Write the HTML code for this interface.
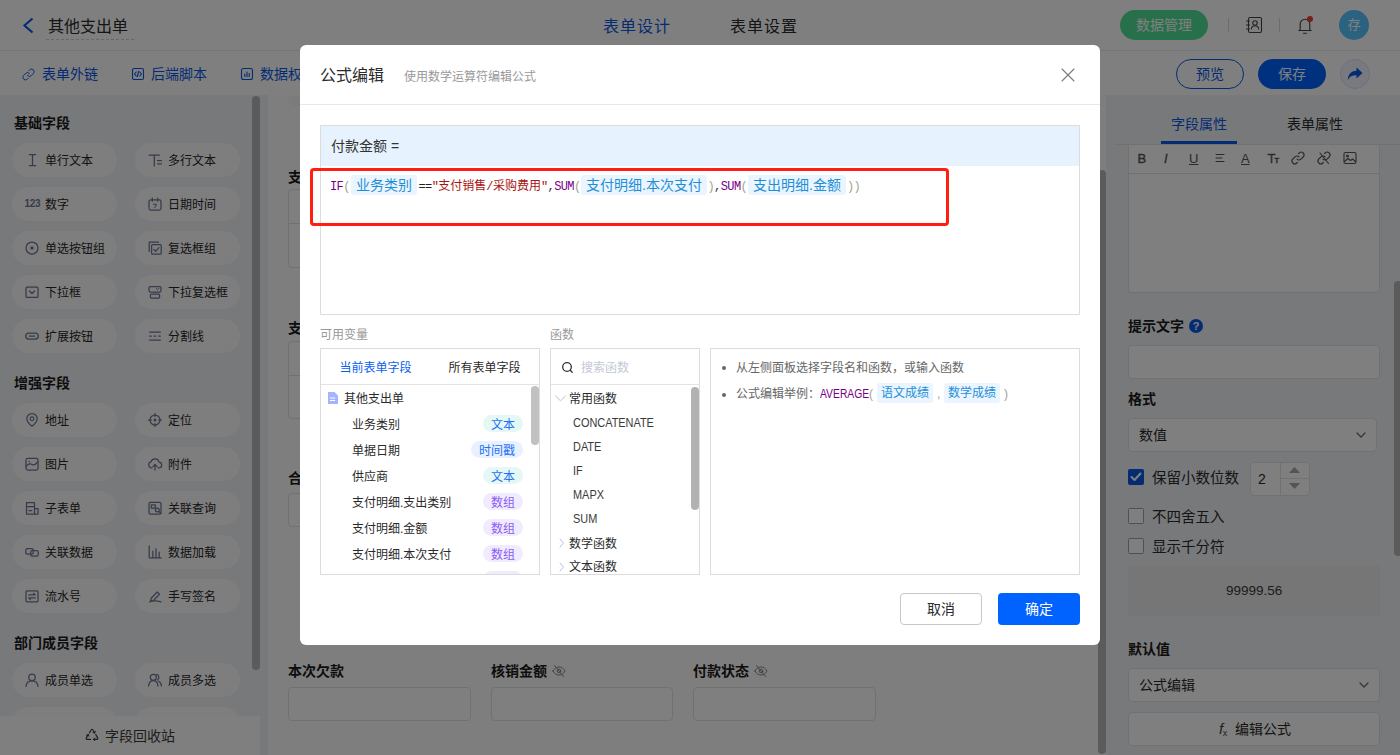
<!DOCTYPE html>
<html lang="zh-CN"><head><meta charset="utf-8"><title>公式编辑</title><style>
*{box-sizing:border-box;margin:0;padding:0}
html,body{width:1400px;height:755px;overflow:hidden;background:#fff}
body{font-family:"Liberation Sans","Noto Sans CJK SC",sans-serif;font-size:14px;color:#333;position:relative}
.abs{position:absolute}
.t{position:absolute;white-space:nowrap;line-height:20px;height:20px}
svg{position:absolute;overflow:visible}
#app{position:absolute;left:0;top:0;width:1400px;height:755px;overflow:hidden;background:#fff}
#mask{position:absolute;left:0;top:0;width:1400px;height:755px;background:rgba(0,0,0,.5)}
#modal{position:absolute;left:300px;top:45px;width:800px;height:600px;background:#fff;border-radius:6px;overflow:hidden}
.hdr{position:absolute;left:0;top:0;width:1400px;height:51px;border-bottom:1px solid #eeeeee;background:#fff}
.tb{position:absolute;left:0;top:51px;width:1400px;height:44px;background:#fff;box-shadow:0 1px 3px rgba(0,0,0,.08)}
.side{position:absolute;left:0;top:96px;width:268px;height:659px;background:#f1f3f7}
.pill{position:absolute;width:105px;height:34px;border-radius:17px;background:#fdfdfe}
.pill .t{left:33px;top:8px;font-size:12px;color:#262626}
.sec{font-weight:bold;font-size:14px;color:#1a1a1a}
.sfoot{position:absolute;left:0;top:716px;width:260px;height:39px;background:#fff}
.thumb{position:absolute;border-radius:4px;background:#b6b6b6}
.right{position:absolute;left:1106px;top:96px;width:294px;height:659px;background:#f1f3f7}
.inp{position:absolute;border:1px solid #e3e3e3;border-radius:4px;background:#fff}
.lbl{font-weight:bold;font-size:14px;color:#1a1a1a}
.cb{position:absolute;width:16px;height:16px;border:1px solid #a09cb0;border-radius:1.5px;background:#fff}
.box{position:absolute;border:1px solid #dcdcdc;background:#fff}
.tag{position:absolute;height:17px;border-radius:9px;font-size:12px;line-height:21px;text-align:center;overflow:hidden}
.ftag{position:absolute;height:20px;border-radius:3px;background:#ebf5ff;color:#1e8fd6;font-size:14px;line-height:20px;text-align:center;white-space:nowrap}
.mono{font-family:"Liberation Mono","Noto Sans CJK SC",monospace;font-size:12px;letter-spacing:-0.6px}
</style></head><body>
<div id="app">
<div class="hdr">
<svg style="left:22px;top:17px" width="13" height="17" viewBox="0 0 13 17" fill="none" stroke="#0a58e6" stroke-width="2.2" stroke-linecap="butt" stroke-linejoin="miter"><path d="M10.5 1.5L2.5 8.5l8 7"/></svg>
<div class="abs" style="left:46px;top:12px;width:88px;height:28px;border-bottom:1px dashed #d0d0d0"></div>
<div class="t " style="left:48px;top:17px;font-size:16px;color:#2a2a2a;">其他支出单</div>
<div class="t " style="left:603px;top:17px;font-size:16px;color:#0a58e6;letter-spacing:1px;">表单设计</div>
<div class="t " style="left:730px;top:17px;font-size:16px;color:#2a2a2a;letter-spacing:1px;">表单设置</div>
<div class="abs" style="left:1120px;top:10px;width:88px;height:30px;border-radius:15px;background:#50e098"></div>
<div class="t " style="left:1136px;top:15px;font-size:14px;color:#fff;">数据管理</div>
<div class="abs" style="left:1228px;top:18px;width:1px;height:14px;background:#d8d8d8"></div>
<div class="abs" style="left:1279px;top:18px;width:1px;height:14px;background:#d8d8d8"></div>
<svg style="left:1245px;top:16px" width="18" height="18" viewBox="0 0 18 18" fill="none" stroke="#454545" stroke-width="1.1" stroke-linecap="round" stroke-linejoin="round"><rect x="3.5" y="1.5" width="13" height="15" rx="1.5"/><circle cx="10" cy="7" r="2.2"/><path d="M6.3 13c.3-2 1.7-3.2 3.7-3.2s3.4 1.2 3.7 3.2"/><path d="M1.5 5h3M1.5 9h3M1.5 13h3"/></svg>
<svg style="left:1296px;top:15px" width="18" height="20" viewBox="0 0 18 20" fill="none" stroke="#454545" stroke-width="1.15" stroke-linecap="round" stroke-linejoin="round"><path d="M2.8 15.5h12.4M4.2 15.5V9a4.8 4.8 0 0 1 9.6 0v6.5M7.6 18.2h2.8"/><circle cx="14" cy="4" r="3" fill="#f03a3a" stroke="none"/></svg>
<div class="abs" style="left:1339px;top:10px;width:30px;height:30px;border-radius:15px;background:#54c4ff"></div>
<div class="t " style="left:1347.5px;top:15px;font-size:13px;color:#fff;">存</div>
</div>
<div class="tb"></div>
<svg style="left:22px;top:67.5px" width="13" height="13" viewBox="0 0 14 14" fill="none" stroke="#0a58e6" stroke-width="1.05" stroke-linecap="round" stroke-linejoin="round"><path d="M6 8.2a2.8 2.8 0 0 0 4 0l2.2-2.2a2.8 2.8 0 0 0-4-4L7.5 2.7"/><path d="M8 5.8a2.8 2.8 0 0 0-4 0L1.8 8a2.8 2.8 0 0 0 4 4l.7-.7"/></svg>
<div class="t " style="left:42px;top:64px;font-size:14px;color:#0a58e6;">表单外链</div>
<svg style="left:131px;top:67px" width="14" height="14" viewBox="0 0 14 14" fill="none" stroke="#0a58e6" stroke-width="1.1" stroke-linecap="round" stroke-linejoin="round"><rect x="1.5" y="1.5" width="11" height="11" rx="1.5"/><path d="M5.2 5L3.5 7l1.7 2M8.8 5l1.7 2-1.7 2M7.6 4.5L6.4 9.5"/></svg>
<div class="t " style="left:151px;top:64px;font-size:14px;color:#0a58e6;">后端脚本</div>
<svg style="left:240px;top:67px" width="14" height="14" viewBox="0 0 14 14" fill="none" stroke="#0a58e6" stroke-width="1.1" stroke-linecap="round" stroke-linejoin="round"><rect x="1.5" y="1.5" width="11" height="11" rx="2"/><path d="M4.8 9.5V7M7 9.5V5M9.2 9.5V6.5"/></svg>
<div class="t " style="left:260px;top:64px;font-size:14px;color:#0a58e6;">数据权限</div>
<div class="abs" style="left:1176px;top:59px;width:68px;height:30px;border-radius:15px;border:1px solid #0a58e6;background:#fff"></div>
<div class="t " style="left:1196px;top:64px;font-size:14px;color:#0a58e6;">预览</div>
<div class="abs" style="left:1258px;top:59px;width:68px;height:30px;border-radius:15px;background:#0062ff"></div>
<div class="t " style="left:1278px;top:64px;font-size:14px;color:#fff;">保存</div>
<div class="abs" style="left:1340px;top:59px;width:30px;height:30px;border-radius:15px;background:#f0f4ff;border:1px solid #d9e2f5"></div>
<svg style="left:1347px;top:67px" width="16" height="14" viewBox="0 0 16 14"><path d="M9.5 0.5L15.5 6l-6 5.5V8.2C5.5 8 2.8 9.3.8 13 1 8 3.5 4 9.5 3.8z" fill="#0a58e6"/></svg>
<div class="side"></div>
<div class="t sec" style="left:14px;top:113px;font-size:14px;color:#1a1a1a;">基础字段</div>
<div class="pill" style="left:12px;top:143px">
<svg style="left:13px;top:10px" width="14" height="14" viewBox="0 0 14 14" fill="none" stroke="#6b7792" stroke-width="1.25" stroke-linecap="round" stroke-linejoin="round"><path d="M4.3 1.5h6.4M7.5 1.5v11M4.3 12.5h6.4"/></svg>
<div class="t">单行文本</div></div>
<div class="pill" style="left:135px;top:143px">
<svg style="left:13px;top:10px" width="14" height="14" viewBox="0 0 14 14" fill="none" stroke="#6b7792" stroke-width="1.25" stroke-linecap="round" stroke-linejoin="round"><path d="M1 2h10.5M6.3 2v11M9.5 7.5h4M9.5 10.8h4"/></svg>
<div class="t">多行文本</div></div>
<div class="pill" style="left:12px;top:187px">
<div class="t" style="left:12.5px;top:7px;font-size:10px;font-weight:bold;color:#6b7792;letter-spacing:-0.3px">123</div>
<div class="t">数字</div></div>
<div class="pill" style="left:135px;top:187px">
<svg style="left:13px;top:10px" width="14" height="14" viewBox="0 0 14 14" fill="none" stroke="#6b7792" stroke-width="1.25" stroke-linecap="round" stroke-linejoin="round"><rect x="1" y="2.8" width="12" height="10.2" rx="1.8"/><path d="M4.3 1v3.2M9.7 1v3.2"/><path d="M5.3 7.2h3.2l-1.8 3.6" stroke-width="1"/></svg>
<div class="t">日期时间</div></div>
<div class="pill" style="left:12px;top:231px">
<svg style="left:13px;top:10px" width="14" height="14" viewBox="0 0 14 14" fill="none" stroke="#6b7792" stroke-width="1.25" stroke-linecap="round" stroke-linejoin="round"><circle cx="7" cy="7" r="6"/><circle cx="7" cy="7" r="1.7" fill="#6b7792" stroke="none"/></svg>
<div class="t">单选按钮组</div></div>
<div class="pill" style="left:135px;top:231px">
<svg style="left:13px;top:10px" width="14" height="14" viewBox="0 0 14 14" fill="none" stroke="#6b7792" stroke-width="1.25" stroke-linecap="round" stroke-linejoin="round"><path d="M1.2 10.5V1.2h9.3"/><rect x="3.6" y="3.6" width="9.6" height="9.6" rx="1"/><path d="M5.8 8.4l1.9 1.9 3.2-3.6"/></svg>
<div class="t">复选框组</div></div>
<div class="pill" style="left:12px;top:275px">
<svg style="left:13px;top:10px" width="14" height="14" viewBox="0 0 14 14" fill="none" stroke="#6b7792" stroke-width="1.25" stroke-linecap="round" stroke-linejoin="round"><rect x="1" y="2" width="12" height="10.4" rx="1"/><path d="M4.5 6L7 8.5 9.5 6"/></svg>
<div class="t">下拉框</div></div>
<div class="pill" style="left:135px;top:275px">
<svg style="left:13px;top:10px" width="14" height="14" viewBox="0 0 14 14" fill="none" stroke="#6b7792" stroke-width="1.25" stroke-linecap="round" stroke-linejoin="round"><rect x="1" y="1.6" width="12" height="5.4" rx="1.2"/><rect x="2.4" y="9" width="9.2" height="4" rx="1"/><path d="M8.3 3.5l1.2 1.2 1.6-1.6" stroke-width="1"/></svg>
<div class="t">下拉复选框</div></div>
<div class="pill" style="left:12px;top:319px">
<svg style="left:13px;top:10px" width="14" height="14" viewBox="0 0 14 14" fill="none" stroke="#6b7792" stroke-width="1.25" stroke-linecap="round" stroke-linejoin="round"><rect x="0.7" y="4" width="12.6" height="6.2" rx="3.1"/><path d="M4.3 7.1h5.4"/></svg>
<div class="t">扩展按钮</div></div>
<div class="pill" style="left:135px;top:319px">
<svg style="left:13px;top:10px" width="14" height="14" viewBox="0 0 14 14" fill="none" stroke="#6b7792" stroke-width="1.25" stroke-linecap="round" stroke-linejoin="round"><path d="M1.2 3h11.6M1.2 11.2h11.6" stroke-linecap="butt"/><path d="M1.2 7.1h2.6M5.7 7.1h2.6M10.2 7.1h2.6" stroke-linecap="butt"/></svg>
<div class="t">分割线</div></div>
<div class="t sec" style="left:14px;top:373px;font-size:14px;color:#1a1a1a;">增强字段</div>
<div class="pill" style="left:12px;top:403px">
<svg style="left:13px;top:10px" width="14" height="14" viewBox="0 0 14 14" fill="none" stroke="#6b7792" stroke-width="1.25" stroke-linecap="round" stroke-linejoin="round"><path d="M7 13.3S1.8 9 1.8 5.7a5.2 5.2 0 0 1 10.4 0C12.2 9 7 13.3 7 13.3z"/><circle cx="7" cy="5.7" r="1.8"/></svg>
<div class="t">地址</div></div>
<div class="pill" style="left:135px;top:403px">
<svg style="left:13px;top:10px" width="14" height="14" viewBox="0 0 14 14" fill="none" stroke="#6b7792" stroke-width="1.25" stroke-linecap="round" stroke-linejoin="round"><circle cx="7" cy="7" r="5"/><circle cx="7" cy="7" r="1.5" fill="#6b7792" stroke="none"/><path d="M7 .6v2.8M7 10.6v2.8M.6 7h2.8M10.6 7h2.8"/></svg>
<div class="t">定位</div></div>
<div class="pill" style="left:12px;top:447px">
<svg style="left:13px;top:10px" width="14" height="14" viewBox="0 0 14 14" fill="none" stroke="#6b7792" stroke-width="1.25" stroke-linecap="round" stroke-linejoin="round"><rect x="1" y="1.4" width="12" height="11.6" rx="1.8"/><path d="M1.2 9.5c2.2-3 4.2-3.3 5.8-2s3.2.4 5.8-2.5"/><circle cx="4.2" cy="4.6" r=".8" fill="#6b7792" stroke="none"/></svg>
<div class="t">图片</div></div>
<div class="pill" style="left:135px;top:447px">
<svg style="left:13px;top:10px" width="14" height="14" viewBox="0 0 14 14" fill="none" stroke="#6b7792" stroke-width="1.25" stroke-linecap="round" stroke-linejoin="round"><path d="M4 10.8h-.6a3 3 0 0 1-.4-5.9 4.2 4.2 0 0 1 8.1.3 2.8 2.8 0 0 1-.4 5.6H10"/><path d="M7 13V7.6M4.9 9.6L7 7.5l2.1 2.1"/></svg>
<div class="t">附件</div></div>
<div class="pill" style="left:12px;top:491px">
<svg style="left:13px;top:10px" width="14" height="14" viewBox="0 0 14 14" fill="none" stroke="#6b7792" stroke-width="1.25" stroke-linecap="round" stroke-linejoin="round"><path d="M1.5 1.5h8v11.5h-8zM1.5 5.5h8"/><path d="M9.5 7.5h3.5v5.5H9.5M3.8 9.5h3"/></svg>
<div class="t">子表单</div></div>
<div class="pill" style="left:135px;top:491px">
<svg style="left:13px;top:10px" width="14" height="14" viewBox="0 0 14 14" fill="none" stroke="#6b7792" stroke-width="1.25" stroke-linecap="round" stroke-linejoin="round"><rect x="1" y="1.4" width="12" height="11.6" rx="1.2"/><path d="M3.3 3.8h4v3.4h-4z"/><circle cx="9.3" cy="9" r="1.9"/><path d="M10.7 10.4l2.3 2.3"/></svg>
<div class="t">关联查询</div></div>
<div class="pill" style="left:12px;top:535px">
<svg style="left:13px;top:10px" width="14" height="14" viewBox="0 0 14 14" fill="none" stroke="#6b7792" stroke-width="1.25" stroke-linecap="round" stroke-linejoin="round"><rect x="0.8" y="3.6" width="7.5" height="5.6" rx="1.6"/><rect x="5.7" y="5.6" width="7.5" height="5.6" rx="1.6"/></svg>
<div class="t">关联数据</div></div>
<div class="pill" style="left:135px;top:535px">
<svg style="left:13px;top:10px" width="14" height="14" viewBox="0 0 14 14" fill="none" stroke="#6b7792" stroke-width="1.25" stroke-linecap="round" stroke-linejoin="round"><path d="M1.2 0.8v12h12"/><path d="M4.8 6.2v6.4M8 3.6v9M11.2 7.2v5.4"/></svg>
<div class="t">数据加载</div></div>
<div class="pill" style="left:12px;top:579px">
<svg style="left:13px;top:10px" width="14" height="14" viewBox="0 0 14 14" fill="none" stroke="#6b7792" stroke-width="1.25" stroke-linecap="round" stroke-linejoin="round"><rect x="1" y="1.8" width="12" height="11" rx="1"/><path d="M3.8 5.9h6.4M3.8 8.9h6.4M8.6 4.3l1.6 1.6M5.4 10.5L3.8 8.9"/></svg>
<div class="t">流水号</div></div>
<div class="pill" style="left:135px;top:579px">
<svg style="left:13px;top:10px" width="14" height="14" viewBox="0 0 14 14" fill="none" stroke="#6b7792" stroke-width="1.25" stroke-linecap="round" stroke-linejoin="round"><path d="M3.2 9.2l6-6.2 2.3 2.3-6 6.2-2.9.6z"/><path d="M1.5 13c2.5-1.2 6.5-1.4 11.5-.2"/></svg>
<div class="t">手写签名</div></div>
<div class="t sec" style="left:14px;top:633px;font-size:14px;color:#1a1a1a;">部门成员字段</div>
<div class="pill" style="left:12px;top:663px">
<svg style="left:13px;top:10px" width="14" height="14" viewBox="0 0 14 14" fill="none" stroke="#6b7792" stroke-width="1.25" stroke-linecap="round" stroke-linejoin="round"><circle cx="7" cy="4.3" r="3.3"/><path d="M1 13.4c.3-3.5 2.7-5.6 6-5.6s5.7 2.1 6 5.6"/></svg>
<div class="t">成员单选</div></div>
<div class="pill" style="left:135px;top:663px">
<svg style="left:13px;top:10px" width="14" height="14" viewBox="0 0 14 14" fill="none" stroke="#6b7792" stroke-width="1.25" stroke-linecap="round" stroke-linejoin="round"><circle cx="5.3" cy="4.3" r="3"/><path d="M.6 13c.3-3.2 2-5.3 4.7-5.3s4.4 2.1 4.7 5.3"/><path d="M8.6 1.4a3 3 0 0 1 .6 5.6M10.6 8.2c1.7.8 2.6 2.4 2.8 4.8"/></svg>
<div class="t">成员多选</div></div>
<div class="pill" style="left:12px;top:707px">
<div class="t">部门单选</div></div>
<div class="pill" style="left:135px;top:707px">
<div class="t">部门多选</div></div>
<div class="thumb" style="left:252px;top:96px;width:8px;height:574px"></div>
<div class="sfoot"></div>
<svg style="left:85px;top:727.2px" width="14" height="14" viewBox="0 0 14 14" fill="none" stroke="#3c3c3c" stroke-width="1.15" stroke-linecap="round" stroke-linejoin="round"><path d="M4.4 5.9L6.2 2.7a.9.9 0 0 1 1.6 0l1.8 3.2"/><path d="M10.8 7.6l1.9 3.3a.9.9 0 0 1-.8 1.4H8.6"/><path d="M5.6 12.3H2.1a.9.9 0 0 1-.8-1.4L3.2 7.6"/><path d="M8 5.5l1.7.5.5-1.7M9.8 10.9l-1.3 1.4 1.3 1.4M1.6 8.1l1.7-.6.5 1.7" stroke-width="1"/></svg>
<div class="t " style="left:105px;top:726px;font-size:14px;color:#3a3a3a;">字段回收站</div>
<div class="abs" style="left:268px;top:95px;width:838px;height:660px;background:#fcfcfc"></div>
<div class="abs" style="left:288px;top:96px;width:800px;height:10px;background:#f7f7f7;border-radius:0 0 8px 8px"></div>
<div class="t lbl" style="left:288px;top:166.5px;font-size:14px;color:#1a1a1a;">支付明细</div>
<div class="inp" style="left:288px;top:189px;width:800px;height:79px"><div class="abs" style="left:0;top:33px;width:100%;height:1px;background:#e3e3e3"></div></div>
<div class="t lbl" style="left:288px;top:318px;font-size:14px;color:#1a1a1a;">支出明细</div>
<div class="inp" style="left:288px;top:341px;width:800px;height:78px"><div class="abs" style="left:0;top:33px;width:100%;height:1px;background:#e3e3e3"></div></div>
<div class="t lbl" style="left:288px;top:467.5px;font-size:14px;color:#1a1a1a;">合计金额</div>
<div class="inp" style="left:288px;top:493px;width:183px;height:34px"></div>
<div class="t lbl" style="left:288px;top:661px;font-size:14px;color:#1a1a1a;">本次欠款</div>
<div class="inp" style="left:288px;top:687px;width:183px;height:34px"></div>
<div class="t lbl" style="left:491px;top:661px;font-size:14px;color:#1a1a1a;">核销金额</div>
<div class="inp" style="left:491px;top:687px;width:182px;height:34px"></div>
<div class="t lbl" style="left:693px;top:661px;font-size:14px;color:#1a1a1a;">付款状态</div>
<div class="inp" style="left:693px;top:687px;width:183px;height:34px"></div>
<svg style="left:552px;top:664px" width="14" height="14" viewBox="0 0 14 14" fill="none" stroke="#8a8a8a" stroke-width="1" stroke-linecap="round" stroke-linejoin="round"><path d="M1 7c1.5-2.7 3.5-4 6-4s4.5 1.3 6 4c-1.5 2.7-3.5 4-6 4s-4.5-1.3-6-4z"/><circle cx="7" cy="7" r="1.8"/><path d="M2.5 1.5l9 11"/></svg>
<svg style="left:754px;top:664px" width="14" height="14" viewBox="0 0 14 14" fill="none" stroke="#8a8a8a" stroke-width="1" stroke-linecap="round" stroke-linejoin="round"><path d="M1 7c1.5-2.7 3.5-4 6-4s4.5 1.3 6 4c-1.5 2.7-3.5 4-6 4s-4.5-1.3-6-4z"/><circle cx="7" cy="7" r="1.8"/><path d="M2.5 1.5l9 11"/></svg>
<div class="thumb" style="left:1098px;top:170px;width:8px;height:584px"></div>
<div class="right"></div>
<div class="t " style="left:1171px;top:114px;font-size:14px;color:#0a58e6;">字段属性</div>
<div class="t " style="left:1287px;top:114px;font-size:14px;color:#2a2a2a;">表单属性</div>
<div class="abs" style="left:1114px;top:144px;width:286px;height:1px;background:#e3e3e3"></div>
<div class="abs" style="left:1161px;top:141px;width:76px;height:3px;background:#0a58e6"></div>
<div class="inp" style="left:1128px;top:144px;width:252px;height:149px;border-radius:0 0 3px 3px"><div class="abs" style="left:0;top:28px;width:100%;height:1px;background:#e3e3e3"></div></div>
<div class="t" style="left:1137.5px;top:149px;font-size:13px;color:#555;-webkit-text-stroke:0.4px #555">B</div>
<div class="t" style="left:1164px;top:149px;font-size:13px;font-style:italic;color:#555;-webkit-text-stroke:0.3px #555">I</div>
<div class="t" style="left:1189px;top:149px;font-size:13px;text-decoration:underline;color:#555">U</div>
<svg style="left:1213px;top:151px" width="14" height="14" viewBox="0 0 14 14" fill="none" stroke="#555" stroke-width="1.1" stroke-linecap="round" stroke-linejoin="round"><path d="M3 3.5h8M3 7h6M3 10.5h8"/></svg>
<div class="t" style="left:1241px;top:149px;font-size:13px;text-decoration:underline;color:#555">A</div>
<div class="t" style="left:1267.5px;top:149px;font-size:13px;color:#555;-webkit-text-stroke:0.3px #555">T<span style="font-size:7.5px;font-weight:bold;margin-left:-1px">T</span></div>
<svg style="left:1291px;top:151px" width="14" height="14" viewBox="0 0 14 14" fill="none" stroke="#555" stroke-width="1.1" stroke-linecap="round" stroke-linejoin="round"><path d="M6 8.2a2.8 2.8 0 0 0 4 0l2.2-2.2a2.8 2.8 0 0 0-4-4L7.5 2.7"/><path d="M8 5.8a2.8 2.8 0 0 0-4 0L1.8 8a2.8 2.8 0 0 0 4 4l.7-.7"/></svg>
<svg style="left:1317px;top:151px" width="14" height="14" viewBox="0 0 14 14" fill="none" stroke="#555" stroke-width="1.1" stroke-linecap="round" stroke-linejoin="round"><path d="M6 8.2a2.8 2.8 0 0 0 4 0l2.2-2.2a2.8 2.8 0 0 0-4-4L7.5 2.7"/><path d="M8 5.8a2.8 2.8 0 0 0-4 0L1.8 8a2.8 2.8 0 0 0 4 4l.7-.7"/><path d="M3 2l8.5 10.5"/></svg>
<svg style="left:1343px;top:151px" width="14" height="14" viewBox="0 0 14 14" fill="none" stroke="#555" stroke-width="1.1" stroke-linecap="round" stroke-linejoin="round"><rect x="1" y="1.5" width="12" height="11" rx="1.5"/><circle cx="4.5" cy="5" r="1"/><path d="M1.5 10.5l3.5-3 2.5 2 2-1.5 3 2.5"/></svg>
<div class="t lbl" style="left:1128px;top:316px;font-size:14px;color:#1a1a1a;">提示文字</div>
<div class="abs" style="left:1189px;top:319px;width:14px;height:14px;border-radius:7px;background:#0a58e6;color:#fff;font-size:11px;font-weight:bold;line-height:14px;text-align:center">?</div>
<div class="inp" style="left:1128px;top:345px;width:252px;height:34px"></div>
<div class="t lbl" style="left:1128px;top:388.5px;font-size:14px;color:#1a1a1a;">格式</div>
<div class="inp" style="left:1128px;top:418px;width:249px;height:34px"></div>
<div class="t " style="left:1139px;top:425px;font-size:14px;color:#2a2a2a;">数值</div>
<svg style="left:1354px;top:428px" width="14" height="14" viewBox="0 0 14 14" fill="none" stroke="#666" stroke-width="1.2" stroke-linecap="round" stroke-linejoin="round"><path d="M3 5l4 4 4-4"/></svg>
<div class="cb" style="left:1128px;top:469px;background:#0a58e6;border-color:#0a58e6"></div>
<svg style="left:1128px;top:469px" width="16" height="16" viewBox="0 0 16 16" fill="none" stroke="#fff" stroke-width="2" stroke-linecap="round" stroke-linejoin="round"><path d="M3.5 8l3 3 6-6.5"/></svg>
<div class="t " style="left:1152px;top:467.5px;font-size:14.5px;color:#2a2a2a;">保留小数位数</div>
<div class="inp" style="left:1250px;top:462px;width:60px;height:34px"><div class="abs" style="left:29px;top:0;width:1px;height:100%;background:#e3e3e3"></div><div class="abs" style="left:29px;top:15px;width:30px;height:1px;background:#e3e3e3"></div></div>
<div class="t " style="left:1258px;top:469px;font-size:14px;color:#2a2a2a;">2</div>
<svg style="left:1289px;top:467px" width="11" height="6" viewBox="0 0 11 6"><path d="M0 6L5.5 0 11 6z" fill="#a8a8a8"/></svg>
<svg style="left:1289px;top:483px" width="11" height="6" viewBox="0 0 11 6"><path d="M0 0L5.5 6 11 0z" fill="#a8a8a8"/></svg>
<div class="cb" style="left:1128px;top:508px"></div>
<div class="t " style="left:1152px;top:506.5px;font-size:14.5px;color:#2a2a2a;">不四舍五入</div>
<div class="cb" style="left:1128px;top:538px"></div>
<div class="t " style="left:1152px;top:536.5px;font-size:14.5px;color:#2a2a2a;">显示千分符</div>
<div class="abs" style="left:1128px;top:566px;width:252px;height:50px;background:#ececec"></div>
<div class="t " style="left:1226px;top:581px;font-size:13.5px;color:#3a3a3a;">99999.56</div>
<div class="t lbl" style="left:1128px;top:639px;font-size:14px;color:#1a1a1a;">默认值</div>
<div class="inp" style="left:1128px;top:668px;width:252px;height:34px"></div>
<div class="t " style="left:1139px;top:675px;font-size:14px;color:#2a2a2a;">公式编辑</div>
<svg style="left:1357px;top:678px" width="14" height="14" viewBox="0 0 14 14" fill="none" stroke="#666" stroke-width="1.2" stroke-linecap="round" stroke-linejoin="round"><path d="M3 5l4 4 4-4"/></svg>
<div class="inp" style="left:1128px;top:712px;width:252px;height:34px"></div>
<div class="t" style="left:1219px;top:719px;font-size:15px;font-style:italic;color:#444">f<span style="font-size:9px;font-style:normal;position:relative;top:2px;margin-left:-0.5px">x</span></div>
<div class="t " style="left:1235px;top:719px;font-size:14px;color:#2a2a2a;">编辑公式</div>
<div class="thumb" style="left:1394px;top:281px;width:8px;height:275px"></div>
</div>
<div id="mask"></div>
<div id="modal">
<div class="t " style="left:20px;top:21px;font-size:16px;color:#2a2a2a;">公式编辑</div>
<div class="t " style="left:104px;top:21.5px;font-size:12px;color:#999;">使用数学运算符编辑公式</div>
<svg style="left:761px;top:23px" width="14" height="14" viewBox="0 0 14 14" fill="none" stroke="#7a7a7a" stroke-width="1.1" stroke-linecap="round" stroke-linejoin="round"><path d="M1 1l12 12M13 1L1 13"/></svg>
<div class="box" style="left:0px;top:59px;width:800px;height:1px;border:0;background:#e8e8e8"></div>
<div class="box" style="left:20px;top:80px;width:760px;height:190px;"></div>
<div class="box" style="left:21px;top:81px;width:758px;height:40px;border:0;background:#e6f2fd"></div>
<div class="t " style="left:31px;top:91px;font-size:14px;color:#333;">付款金额 =</div>
<div class="t mono" style="left:30px;top:132px;font-size:12px;color:#770088;font-family:"Liberation Mono","Noto Sans CJK SC",monospace;"><span style="color:#770088">IF</span><span style="color:#a3a38f">(</span></div>
<div class="ftag" style="left:51px;top:130px;width:66px;height:20px;">业务类别</div>
<div class="t mono" style="left:118.5px;top:132px;font-size:12px;color:#333;font-family:"Liberation Mono","Noto Sans CJK SC",monospace;"><span style="color:#222">==</span><span style="color:#aa1111">"<span style="letter-spacing:0">支付销售</span>/<span style="letter-spacing:0">采购费用</span>"</span><span style="color:#333">,</span><span style="color:#770088">SUM</span><span style="color:#a3a38f">(</span></div>
<div class="ftag" style="left:281px;top:130px;width:126px;height:20px;">支付明细.本次支付</div>
<div class="t mono" style="left:407.5px;top:132px;font-size:12px;color:#333;font-family:"Liberation Mono","Noto Sans CJK SC",monospace;"><span style="color:#a3a38f">)</span><span style="color:#333">,</span><span style="color:#770088">SUM</span><span style="color:#a3a38f">(</span></div>
<div class="ftag" style="left:448px;top:130px;width:98px;height:20px;">支出明细.金额</div>
<div class="t mono" style="left:547px;top:132px;font-size:12px;color:#a3a38f;font-family:"Liberation Mono","Noto Sans CJK SC",monospace;">))</div>
<div class="box" style="left:10px;top:123px;width:639px;height:58px;border:3px solid #ff1e10;border-radius:4px;background:transparent"></div>
<div class="t " style="left:20px;top:279.5px;font-size:12px;color:#999;">可用变量</div>
<div class="t " style="left:250px;top:279.5px;font-size:12px;color:#999;">函数</div>
<div class="box" style="left:20px;top:303px;width:220px;height:227px;"></div>
<div class="box" style="left:21px;top:339px;width:218px;height:1px;border:0;background:#e3e3e3"></div>
<div class="t " style="left:39.5px;top:312.5px;font-size:12px;color:#0a60f0;">当前表单字段</div>
<div class="t " style="left:148.5px;top:312.5px;font-size:12px;color:#2a2a2a;">所有表单字段</div>
<svg style="left:28px;top:347px" width="10" height="12" viewBox="0 0 10 12"><path d="M0 0h6.5L10 3.5V12H0z" fill="#a5b4fc"/><path d="M2 6h5M2 8.5h5" stroke="#fff" stroke-width="1"/></svg>
<div class="t " style="left:44px;top:344px;font-size:12px;color:#2a2a2a;">其他支出单</div>
<div class="abs" style="left:21px;top:340px;width:218px;height:189px;overflow:hidden">
<div class="t" style="left:31px;top:29.5px;font-size:12px;color:#2a2a2a">业务类别</div>
<div class="tag" style="left:162px;top:30px;width:40px;background:#e6f8f5;color:#2470f5">文本</div>
<div class="t" style="left:31px;top:55.5px;font-size:12px;color:#2a2a2a">单据日期</div>
<div class="tag" style="left:150px;top:56px;width:52px;background:#e8f1ff;color:#2470f5">时间戳</div>
<div class="t" style="left:31px;top:81.5px;font-size:12px;color:#2a2a2a">供应商</div>
<div class="tag" style="left:162px;top:82px;width:40px;background:#e6f8f5;color:#2470f5">文本</div>
<div class="t" style="left:31px;top:107.5px;font-size:12px;color:#2a2a2a">支付明细.支出类别</div>
<div class="tag" style="left:162px;top:108px;width:40px;background:#f1ebff;color:#8a5cf5">数组</div>
<div class="t" style="left:31px;top:133.5px;font-size:12px;color:#2a2a2a">支付明细.金额</div>
<div class="tag" style="left:162px;top:134px;width:40px;background:#f1ebff;color:#8a5cf5">数组</div>
<div class="t" style="left:31px;top:159.5px;font-size:12px;color:#2a2a2a">支付明细.本次支付</div>
<div class="tag" style="left:162px;top:160px;width:40px;background:#f1ebff;color:#8a5cf5">数组</div>
<div class="t" style="left:31px;top:185.5px;font-size:12px;color:#2a2a2a">支出明细.金额</div>
<div class="tag" style="left:162px;top:186px;width:40px;background:#f1ebff;color:#8a5cf5">数组</div>
</div>
<div class="thumb" style="left:231px;top:340.5px;width:8px;height:59.5px;background:#c1c1c1"></div>
<div class="box" style="left:250px;top:303px;width:150px;height:227px;"></div>
<div class="box" style="left:251px;top:339px;width:148px;height:1px;border:0;background:#e3e3e3"></div>
<svg style="left:261px;top:316px" width="13" height="13" viewBox="0 0 13 13" fill="none" stroke="#333" stroke-width="1.3" stroke-linecap="round" stroke-linejoin="round"><circle cx="6" cy="6" r="4.3"/><path d="M9.2 9.2l2 2"/></svg>
<div class="t " style="left:281px;top:312.5px;font-size:12px;color:#c3c8d8;">搜索函数</div>
<svg style="left:254.5px;top:348px" width="11" height="11" viewBox="0 0 11 11" fill="none" stroke="#bcc2d4" stroke-width="1" stroke-linecap="round" stroke-linejoin="round"><path d="M0.5 3l5 4.8 5-4.8"/></svg>
<div class="t " style="left:269px;top:344px;font-size:12px;color:#2a2a2a;">常用函数</div>
<div class="t " style="left:273px;top:367.5px;font-size:12px;color:#3a3a3a;transform:scaleX(0.91);transform-origin:0 50%;">CONCATENATE</div>
<div class="t " style="left:273px;top:391.5px;font-size:12px;color:#3a3a3a;transform:scaleX(0.91);transform-origin:0 50%;">DATE</div>
<div class="t " style="left:273px;top:415.5px;font-size:12px;color:#3a3a3a;transform:scaleX(0.91);transform-origin:0 50%;">IF</div>
<div class="t " style="left:273px;top:439.5px;font-size:12px;color:#3a3a3a;transform:scaleX(0.91);transform-origin:0 50%;">MAPX</div>
<div class="t " style="left:273px;top:463.5px;font-size:12px;color:#3a3a3a;transform:scaleX(0.91);transform-origin:0 50%;">SUM</div>
<svg style="left:257px;top:492.5px" width="10" height="10" viewBox="0 0 10 10" fill="none" stroke="#bcc2d4" stroke-width="1" stroke-linecap="round" stroke-linejoin="round"><path d="M3 1l3.5 4L3 9"/></svg>
<div class="t " style="left:269px;top:488.5px;font-size:12px;color:#2a2a2a;">数学函数</div>
<svg style="left:257px;top:516.5px" width="10" height="10" viewBox="0 0 10 10" fill="none" stroke="#bcc2d4" stroke-width="1" stroke-linecap="round" stroke-linejoin="round"><path d="M3 1l3.5 4L3 9"/></svg>
<div class="t " style="left:269px;top:512px;font-size:12px;color:#2a2a2a;">文本函数</div>
<div class="box" style="left:251px;top:529px;width:148px;height:1px;border:0;background:#dcdcdc"></div>
<div class="box" style="left:250px;top:530px;width:150px;height:12px;border:0;background:#fff"></div>
<div class="thumb" style="left:391.2px;top:341.5px;width:7.5px;height:123px;background:#b2b2b2"></div>
<div class="box" style="left:410px;top:303px;width:370px;height:227px;"></div>
<div class="box" style="left:421.5px;top:321px;width:4px;height:4px;border:0;border-radius:2px;background:#666"></div>
<div class="t " style="left:436px;top:312.5px;font-size:12px;color:#666;">从左侧面板选择字段名和函数，或输入函数</div>
<div class="box" style="left:421.5px;top:347.5px;width:4px;height:4px;border:0;border-radius:2px;background:#666"></div>
<div class="t " style="left:436px;top:339px;font-size:12px;color:#666;">公式编辑举例：</div>
<div class="t " style="left:520px;top:339px;font-size:12px;color:#770088;transform:scaleX(0.86);transform-origin:0 50%;">AVERAGE</div>
<div class="t " style="left:569px;top:339px;font-size:12px;color:#a3a38f;">(</div>
<div class="ftag" style="left:577px;top:338px;width:56px;height:20px;font-size:12px;">语文成绩</div>
<div class="t " style="left:637px;top:339px;font-size:12px;color:#a3a38f;">,</div>
<div class="ftag" style="left:644px;top:338px;width:56px;height:20px;font-size:12px;">数学成绩</div>
<div class="t " style="left:704px;top:339px;font-size:12px;color:#a3a38f;">)</div>
<div class="box" style="left:600px;top:548px;width:82px;height:32px;border:1px solid #c8c8c8;border-radius:4px"></div>
<div class="t " style="left:627px;top:554px;font-size:14px;color:#2a2a2a;">取消</div>
<div class="box" style="left:698px;top:548px;width:82px;height:32px;border:0;border-radius:4px;background:#0062ff"></div>
<div class="t " style="left:725px;top:554px;font-size:14px;color:#fff;">确定</div>
</div>
</body></html>
